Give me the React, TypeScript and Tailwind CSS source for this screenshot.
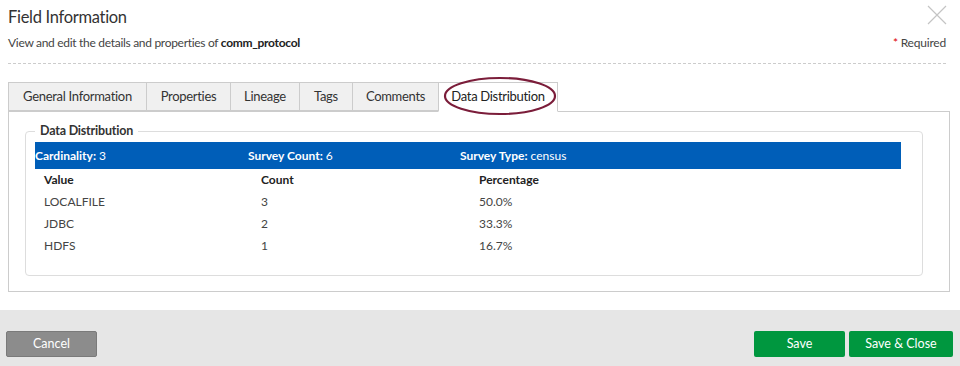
const TABS = [
  { label: "General Information", w: "w-[139px]" },
  { label: "Properties", w: "w-[85px]" },
  { label: "Lineage", w: "w-[70px]" },
  { label: "Tags", w: "w-[54px]" },
  { label: "Comments", w: "w-[87px]" },
  { label: "Data Distribution", w: "w-[120px]" },
];

const ROWS = [
  { value: "LOCALFILE", count: "3", pct: "50.0%" },
  { value: "JDBC", count: "2", pct: "33.3%" },
  { value: "HDFS", count: "1", pct: "16.7%" },
];

export default function App() {
  return (
    <div
      className="w-[960px] h-[366px] bg-white flex flex-col text-[#333]"
      style={{ fontFamily: "Lato, 'Noto Sans', sans-serif" }}
    >
      {/* Header */}
      <div className="px-2 pt-[6px] flex-1">
        <div className="flex items-start justify-between">
          <h1 className="text-[16.5px] leading-[22px] tracking-[-0.3px] text-[#333]">Field Information</h1>
          <svg className="mr-[5px] -mt-px" width="20" height="20" viewBox="0 0 20 20">
            <path d="M1 1 L19 19 M19 1 L1 19" stroke="#c4c4c4" strokeWidth="1.2" fill="none" />
          </svg>
        </div>
        <div className="flex items-center justify-between mt-[7px] mr-[6px] text-[12px] leading-[16px]">
          <p className="text-[#444] tracking-[-0.3px]">
            View and edit the details and properties of <span className="font-bold text-[#222]">comm_protocol</span>
          </p>
          <p className="text-[#444] tracking-[-0.2px]">
            <span className="text-[#d00]">*</span> Required
          </p>
        </div>
        <div className="border-t border-dashed border-[#ccc] mt-[12px] mr-[6px]" />

        {/* Tabs */}
        <div className="mt-[18px] mr-[2px]">
          <div className="relative flex text-[13px] leading-[27px] tracking-[-0.3px]">
            {TABS.map((tab) => {
              const active = tab.label === "Data Distribution";
              return (
                <div
                  key={tab.label}
                  className={
                    active
                      ? `${tab.w} text-center bg-white border border-[#ccc] border-b-white -mb-px relative z-10 text-[#222]`
                      : `${tab.w} text-center bg-[#f0f0f0] border border-[#ccc] -mr-px text-[#333]`
                  }
                >
                  {tab.label}
                </div>
              );
            })}
            <svg className="absolute left-[430px] top-[-7px] z-20" width="124" height="42" viewBox="0 0 124 42">
              <ellipse cx="62" cy="21" rx="55" ry="18" fill="none" stroke="#7b1d3a" strokeWidth="2.2" />
            </svg>
          </div>
          <div className="border border-[#ccc] h-[181px] pt-[12px] pl-[16px] pr-[26px]">
            <fieldset className="border border-[#ddd] rounded-[4px] h-[152px] px-[9px] pb-2">
              <legend className="px-[5px] text-[12.5px] font-bold text-[#333] leading-[14px] tracking-[-0.2px]">
                Data Distribution
              </legend>
              <div className="bg-[#005eb8] text-white text-[12px] h-[27px] flex items-center mr-[12px] mt-[4px]">
                <div className="w-[213px]"><span className="font-bold">Cardinality:</span> 3</div>
                <div className="w-[212px]"><span className="font-bold">Survey Count:</span> 6</div>
                <div><span className="font-bold">Survey Type:</span> census</div>
              </div>
              <div className="text-[12px] leading-[22px] pl-[9px]">
                <div className="flex font-bold text-[#222]">
                  <div className="w-[217px]">Value</div>
                  <div className="w-[218px]">Count</div>
                  <div>Percentage</div>
                </div>
                {ROWS.map((r) => (
                  <div key={r.value} className="flex text-[#444]">
                    <div className="w-[217px]">{r.value}</div>
                    <div className="w-[218px]">{r.count}</div>
                    <div>{r.pct}</div>
                  </div>
                ))}
              </div>
            </fieldset>
          </div>
        </div>
      </div>

      {/* Footer */}
      <div className="h-[56px] bg-[#e6e6e6] flex items-end justify-between px-[6px] pb-[9px] text-[12.5px]">
        <button className="w-[91px] h-[26px] bg-[#8c8c8c] text-white rounded-[2px] border border-[#7a7a7a]">Cancel</button>
        <div className="flex gap-[4px] mr-px">
          <button className="w-[91px] h-[26px] bg-[#00973f] text-white rounded-[2px]">Save</button>
          <button className="w-[104px] h-[26px] bg-[#00973f] text-white rounded-[2px]">Save &amp; Close</button>
        </div>
      </div>
    </div>
  );
}
